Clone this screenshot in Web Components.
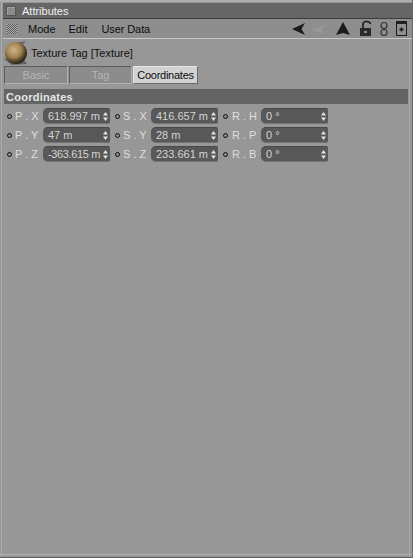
<!doctype html>
<html><head><meta charset="utf-8"><style>
html,body{margin:0;padding:0;width:413px;height:558px;overflow:hidden;background:#969696}
body{font:11px "Liberation Sans",Arial,sans-serif;color:#111}
</style></head><body>
<attr-panel>
  <title-bar slot="top">Attributes</title-bar>
  <menu-bar slot="top"></menu-bar>
  <tag-head slot="top">Texture Tag [Texture]</tag-head>
  <tab-strip slot="top"></tab-strip>
  <section-bar>Coordinates</section-bar>
  <coord-grid></coord-grid>
</attr-panel>
<script>
function def(name,html,init){customElements.define(name,class extends HTMLElement{connectedCallback(){if(this.shadowRoot)return;const r=this.attachShadow({mode:'open'});r.innerHTML=html;if(init)init(r,this)}})}
def('attr-panel',`<style>:host{display:block;box-sizing:border-box;width:413px;height:558px;padding:3px 0 0;background:#979797;border-top:0 solid #b4b4b4;border-bottom:1px solid #5e5e5e;border-right:1px solid #6a6a6a;position:relative}
.l{position:absolute;top:0;bottom:0;left:1px;width:1px;background:#acacac}
.r{position:absolute;top:0;bottom:0;right:2px;width:1px;background:#a8a8a8}
.b{position:absolute;left:0;right:0;bottom:2px;height:1px;background:#b0b0b0}
.t{position:absolute;left:0;right:0;top:0;height:2px;background:#adadad}
.body{padding:0 4px 0 4px}</style><div class="t"></div><div class="l"></div><div class="r"></div><div class="b"></div><slot name="top"></slot><div class="body"><slot></slot></div>`);
def('title-bar',`<style>:host{display:flex;align-items:center;box-sizing:border-box;height:16px;margin:0 0 0 3px;background:#666;color:#f2f2f2;font-size:11px;border-bottom:1px solid #3c3c3c;position:relative}
.i{box-sizing:border-box;width:10px;height:10px;margin:0 6px 0 3px;background:#8a8a8a;border:1px solid #555;box-shadow:inset 1px 1px 0 #a4a4a4}
</style><span class="i"></span><slot></slot>`);
def('menu-bar',`<style>:host{display:flex;align-items:center;box-sizing:border-box;height:20px;margin:0 0 0 3px;background:#8e8e8e;border-bottom:1px solid #c8c8c8;color:#0c0c0c;font-size:11px;position:relative}
.grip{width:10px;height:10px;margin:0 11px 0 4px;background:repeating-conic-gradient(#5e5e5e 0 25%,#aaa 0 50%) 0 0/2px 2px}
.m{margin-right:14px}
.m2{margin-right:14px}
.ic{margin-left:auto;display:flex;align-items:center;margin-right:3px}
svg{display:block}
</style><span class="grip"></span><span class="m" style="margin-right:13px">Mode</span><span class="m">Edit</span><span style="letter-spacing:-.1px">User Data</span>
<span class="ic"><svg width="120" height="18" viewBox="0 0 120 18">
<path d="M3 9 L16 3 L12.500 9 L16 15Z" fill="#1c1c1c"/>
<path d="M22 10 L36 5 L32 10 L36 14Z" fill="#999"/>
<path d="M47 15 L54 2 L61 15 L54 13Z" fill="#1c1c1c"/>
<path d="M74 8 V4.500 Q74 1.500 77.500 1.500 Q81 1.500 81.500 4" fill="none" stroke="#1c1c1c" stroke-width="1.600"/>
<rect x="71" y="8" width="11" height="8" fill="#2a2a2a"/><rect x="75" y="11" width="3" height="2" fill="#888"/>
<circle cx="95" cy="5.500" r="3" fill="none" stroke="#333" stroke-width="1.200"/><circle cx="95" cy="12.500" r="3" fill="none" stroke="#333" stroke-width="1.200"/>
<rect x="107.500" y="1.500" width="10" height="14" fill="#8e8e8e" stroke="#1c1c1c"/><rect x="108" y="2" width="9" height="2" fill="#222"/>
<path d="M110.500 9.500h4M112.500 7.500v4" stroke="#111" stroke-width="1.400"/>
</svg></span>`);
def('tag-head',`<style>:host{display:flex;align-items:center;box-sizing:border-box;height:27px;padding:1px 0 0 4px;font-size:11px;color:#111}
svg{display:block;margin-right:3px}</style>
<svg width="24" height="24" viewBox="0 0 24 24"><defs><radialGradient id="g" cx=".4" cy=".36" r=".68"><stop offset="0" stop-color="#cdb48e"/><stop offset=".5" stop-color="#a2834f"/><stop offset=".82" stop-color="#463820"/><stop offset="1" stop-color="#1c1a14"/></radialGradient></defs>
<path d="M1 9 L8 2 L22 0 L16 7Z" fill="#6a6a6a"/><path d="M0 18 L8 24 L23 23 L18 16Z" fill="#626262"/><circle cx="12" cy="12" r="11" fill="url(#g)"/></svg><slot></slot>`);
def('tab-strip',`<style>:host{display:flex;box-sizing:border-box;height:18px;margin-left:4px;gap:1px;font-size:11px}
span{box-sizing:border-box;width:64px;display:flex;align-items:center;justify-content:center;background:#8c8c8c;color:#b6b6b6;border:1px solid #5c5c5c;border-right-color:#b0b0b0;border-bottom-color:#b0b0b0}
.t2{width:63px}
.a{width:65px;background:#d2d2d2;color:#0c0c0c;border-color:#e4e4e4 #6a6a6a #6a6a6a #e4e4e4;letter-spacing:-.25px}</style>
<span>Basic</span><span class="t2">Tag</span><span class="a">Coordinates</span>`);
def('section-bar',`<style>:host{display:flex;align-items:center;box-sizing:border-box;height:15px;margin-top:5px;padding-left:2px;background:#646464;color:#e6e6e6;font-weight:700;font-size:11px;letter-spacing:.25px}</style><slot></slot>`);
const rows=[[['P . X','618.997 m'],['S . X','416.657 m'],['R . H','0 °']],[['P . Y','47 m'],['S . Y','28 m'],['R . P','0 °']],[['P . Z','-363.615 m'],['S . Z','233.661 m'],['R . B','0 °']]];
def('coord-grid',`<style>:host{display:grid;grid-template-columns:108px 108px 108px;row-gap:3px;padding:4px 0 0 2px;width:max-content}</style><slot></slot>`,(r,h)=>{
  rows.flat().forEach((c,i)=>{const e=document.createElement('coord-field');e.setAttribute('label',c[0]);e.setAttribute('value',c[1]);if(i%3==2)e.setAttribute('wide','');h.appendChild(e)})});
def('coord-field',`<style>:host{display:flex;align-items:center;height:16px;font-size:11px}
.dot{box-sizing:border-box;width:5px;height:5px;border:1px solid #111;border-radius:50%;margin:0 3px 0 1px;background:#8a8a8a}
.lb{width:28px;color:#dedede;font-size:11px;white-space:pre}
:host([wide]) .lb{width:29px;margin-left:1px}
.f{box-sizing:border-box;width:67px;height:16px;border-radius:5px 2px 2px 5px;background:#585858;color:#d4d4d4;display:flex;align-items:center;padding-left:5px;position:relative;border-top:1px solid #484848;border-bottom:1px solid #747474}
.v{white-space:nowrap}
.s{position:absolute;right:2px;top:3px}svg{display:block}
</style><span class="dot"></span><span class="lb"></span><span class="f"><span class="v"></span><svg class="s" width="5" height="9" viewBox="0 0 5 9"><path d="M2.500 0L5 3.500H0ZM2.500 9L0 5.500H5Z" fill="#e4e4e4"/></svg></span>`,(r,h)=>{
  r.querySelector('.lb').textContent=h.getAttribute('label');const v=r.querySelector('.v'),t=h.getAttribute('value');v.textContent=t;if(t.length>9)v.style.letterSpacing='-.35px'});
</script>
</body></html>
